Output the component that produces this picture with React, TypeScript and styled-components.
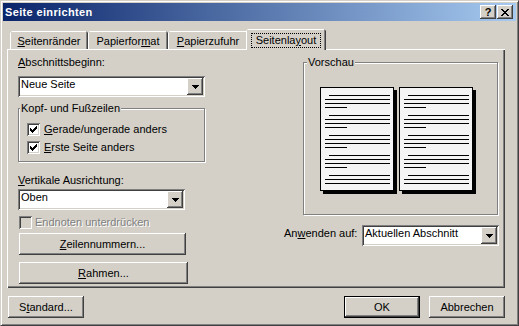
import React from 'react';
import styled, { createGlobalStyle, css } from 'styled-components';

const FACE = '#D4D0C8';

const GlobalStyle = createGlobalStyle`
  html, body { margin: 0; padding: 0; background: ${FACE}; }
  body { font-family: "Liberation Sans", Arial, sans-serif; font-size: 11px; }
  * { box-sizing: border-box; }
`;

const raised = css`
  box-shadow: inset -1px -1px 0 #404040, inset 1px 1px 0 #fff, inset -2px -2px 0 #808080;
`;
const sunken = css`
  box-shadow: inset 1px 1px 0 #808080, inset -1px -1px 0 #fff, inset 2px 2px 0 #404040, inset -2px -2px 0 ${FACE};
`;

const Window = styled.div`
  width: 519px;
  height: 326px;
  background: ${FACE};
  border: 1px solid;
  border-color: ${FACE} #404040 #404040 ${FACE};
  box-shadow: inset 1px 1px 0 #fff, inset -1px -1px 0 #808080;
  padding: 2px;
  display: flex;
  flex-direction: column;
  color: #000;
  font: 11px "Liberation Sans", Arial, sans-serif;
`;

const TitleBar = styled.div`
  flex: none;
  height: 18px;
  margin-bottom: 1px;
  padding: 0 3px 0 2px;
  display: flex;
  align-items: center;
  background: linear-gradient(to right, #0a246a, #a6caf0);
`;

const Title = styled.span`
  flex: 1;
  color: #fff;
  font-weight: bold;
  letter-spacing: 0.35px;
  line-height: 13px;
`;

const CaptionButtons = styled.div`
  display: flex;
  gap: 1px;
`;

const CaptionButton = styled.div`
  width: 16px;
  height: 14px;
  background: ${FACE};
  ${raised};
  display: flex;
  align-items: center;
  justify-content: center;
`;

const HelpGlyph = styled.span`
  font-weight: bold;
  font-size: 11px;
  line-height: 11px;
  margin-top: 1px;
`;

const Client = styled.div`
  flex: 1;
  display: flex;
  flex-direction: column;
  padding: 7px 11px 0 4px;
`;

const TabRow = styled.div`
  height: 20px;
  display: flex;
  align-items: flex-end;
  padding-left: 3px;
  position: relative;
  z-index: 1;
`;

const Tab = styled.div<{ $w: number; $active?: boolean }>`
  width: ${(p) => p.$w}px;
  height: ${(p) => (p.$active ? 21 : 18)}px;
  margin: ${(p) => (p.$active ? '0 -2px -1px' : '0')};
  padding-top: 4px;
  background: ${FACE};
  box-shadow: inset -1px 0 0 #404040, inset -2px 0 0 #808080, inset 1px 1px 0 #fff;
  clip-path: polygon(0 2px, 2px 0, calc(100% - 2px) 0, 100% 2px, 100% 100%, 0 100%);
  display: flex;
  justify-content: center;
  align-items: flex-start;
  line-height: 13px;
  white-space: nowrap;
`;

const FocusRect = styled.span`
  border: 1px dotted #000;
  padding: 0 4px;
  line-height: 13px;
`;

const Panel = styled.div`
  height: 239px;
  background: ${FACE};
  box-shadow: inset 1px 1px 0 #fff, inset -1px -1px 0 #404040, inset -2px -2px 0 #808080;
  display: flex;
  padding: 7px 6px 0 11px;
  gap: 79px;
`;

const Column = styled.div<{ $w: number }>`
  width: ${(p) => p.$w}px;
  display: flex;
  flex-direction: column;
  align-items: flex-start;
`;

const Label = styled.div<{ $mt?: number }>`
  line-height: 13px;
  height: 13px;
  margin-top: ${(p) => p.$mt ?? 0}px;
  white-space: nowrap;
`;

const Acc = styled.span`
  text-decoration: underline;
  text-underline-offset: 1px;
`;

const ComboBox = styled.div<{ $w: number; $mt?: number }>`
  width: ${(p) => p.$w}px;
  height: 21px;
  margin-top: ${(p) => p.$mt ?? 0}px;
  flex: none;
  background: #fff;
  ${sunken};
  padding: 2px;
  display: flex;
`;

const ComboText = styled.span`
  flex: 1;
  padding-left: 1px;
  line-height: 13px;
  white-space: nowrap;
`;

const ComboArrow = styled.span`
  width: 16px;
  height: 17px;
  background: ${FACE};
  ${raised};
  display: flex;
  align-items: center;
  justify-content: center;
`;

const GroupBox = styled.div<{ $w: number; $mt?: number; $ml?: number }>`
  width: ${(p) => p.$w}px;
  margin-top: ${(p) => p.$mt ?? 0}px;
  margin-left: ${(p) => p.$ml ?? 0}px;
  border: 1px solid #808080;
  box-shadow: 1px 1px 0 #fff, inset 1px 1px 0 #fff;
  display: flex;
  flex-direction: column;
  align-items: flex-start;
`;

const Legend = styled.div<{ $ml: number }>`
  margin: -7px 0 0 ${(p) => p.$ml}px;
  padding: 0 1px;
  background: ${FACE};
  line-height: 13px;
  height: 13px;
  white-space: nowrap;
`;

const CheckList = styled.div`
  display: flex;
  flex-direction: column;
  gap: 5px;
  padding: 8px 0 7px 8px;
`;

const CheckRow = styled.div<{ $disabled?: boolean; $mt?: number; $ml?: number; $gap: number }>`
  display: flex;
  align-items: center;
  gap: ${(p) => p.$gap}px;
  height: 13px;
  margin-top: ${(p) => p.$mt ?? 0}px;
  margin-left: ${(p) => p.$ml ?? 0}px;
  line-height: 13px;
  white-space: nowrap;
  color: ${(p) => (p.$disabled ? '#808080' : '#000')};
  text-shadow: ${(p) => (p.$disabled ? '1px 1px 0 #fff' : 'none')};
`;

const CheckBox = styled.span<{ $disabled?: boolean }>`
  width: 13px;
  height: 13px;
  flex: none;
  background: ${(p) => (p.$disabled ? FACE : '#fff')};
  ${sunken};
  display: flex;
  align-items: center;
  justify-content: center;
`;

const PushButton = styled.button<{ $w: number; $h?: number; $mt?: number; $ml?: number; $default?: boolean }>`
  width: ${(p) => p.$w}px;
  height: ${(p) => p.$h ?? 22}px;
  margin: ${(p) => p.$mt ?? 0}px 0 0 ${(p) => p.$ml ?? 0}px;
  padding: 0;
  flex: none;
  font: inherit;
  color: #000;
  line-height: 13px;
  background: ${FACE};
  border: ${(p) => (p.$default ? '1px solid #000' : 'none')};
  ${raised};
  display: flex;
  align-items: center;
  justify-content: center;
  white-space: nowrap;
`;

const Previews = styled.div`
  display: flex;
  gap: 2px;
  margin-top: 18px;
  padding: 0 0 20px 16px;
`;

const ApplyRow = styled.div`
  width: 100%;
  margin-top: 10px;
  display: flex;
  justify-content: space-between;
  align-items: flex-start;
`;

const ButtonRow = styled.div`
  margin-top: 8px;
  height: 22px;
  display: flex;
  padding-left: 1px;
`;

const Spacer = styled.div`
  flex: 1;
`;

const ButtonGap = styled.div`
  width: 9px;
`;

const CheckMark = () => (
  <svg width={7} height={7} viewBox="0 0 7 7" shapeRendering="crispEdges">
    <path
      fill="#000"
      d="M0 2h1v3h-1z M1 3h1v3h-1z M2 4h1v3h-1z M3 3h1v3h-1z M4 2h1v3h-1z M5 1h1v3h-1z M6 0h1v3h-1z"
    />
  </svg>
);

const DownArrow = () => (
  <svg width={7} height={4} viewBox="0 0 7 4" shapeRendering="crispEdges">
    <path fill="#000" d="M0 0h7v1h-7z M1 1h5v1h-5z M2 2h3v1h-3z M3 3h1v1h-1z" />
  </svg>
);

const CloseGlyph = () => (
  <svg width={8} height={7} viewBox="0 0 8 7" shapeRendering="crispEdges">
    <path
      fill="#000"
      d="M0 0h2v1h-2z M6 0h2v1h-2z M1 1h2v1h-2z M5 1h2v1h-2z M2 2h4v1h-4z M3 3h2v1h-2z M2 4h4v1h-4z M1 5h2v1h-2z M5 5h2v1h-2z M0 6h2v1h-2z M6 6h2v1h-2z"
    />
  </svg>
);

const PagePreview = () => {
  const paras = [0, 20, 40, 60, 80];
  return (
    <svg width={77} height={107} viewBox="0 0 77 107" shapeRendering="crispEdges">
      <rect x={3} y={3} width={74} height={104} fill="#000" />
      <rect x={0.5} y={0.5} width={73} height={103} fill="#f4f4f4" stroke="#000" />
      {paras.map((o, i) => (
        <g key={o} fill="#000">
          <rect x={9} y={8 + o} width={61} height={1} />
          <rect x={5} y={12 + o} width={65} height={1} />
          <rect x={5} y={16 + o} width={65} height={1} />
          {i < paras.length - 1 && <rect x={5} y={20 + o} width={22} height={1} />}
        </g>
      ))}
    </svg>
  );
};

const Combo = ({ w, mt, children }: { w: number; mt?: number; children: React.ReactNode }) => (
  <ComboBox $w={w} $mt={mt}>
    <ComboText>{children}</ComboText>
    <ComboArrow>
      <DownArrow />
    </ComboArrow>
  </ComboBox>
);

export default function App() {
  return (
    <>
      <GlobalStyle />
      <Window>
        <TitleBar>
          <Title>Seite einrichten</Title>
          <CaptionButtons>
            <CaptionButton>
              <HelpGlyph>?</HelpGlyph>
            </CaptionButton>
            <CaptionButton>
              <CloseGlyph />
            </CaptionButton>
          </CaptionButtons>
        </TitleBar>
        <Client>
          <TabRow>
            <Tab $w={78}>
              <span>
                <Acc>S</Acc>eitenränder
              </span>
            </Tab>
            <Tab $w={80}>
              <span>
                Papierfor<Acc>m</Acc>at
              </span>
            </Tab>
            <Tab $w={80}>
              <span>
                <Acc>P</Acc>apierzufuhr
              </span>
            </Tab>
            <Tab $w={80} $active>
              <FocusRect>
                Seitenla<Acc>y</Acc>out
              </FocusRect>
            </Tab>
          </TabRow>
          <Panel>
            <Column $w={187}>
              <Label>
                <Acc>A</Acc>bschnittsbeginn:
              </Label>
              <Combo w={187} mt={7}>
                Neue Seite
              </Combo>
              <GroupBox $w={187} $mt={11}>
                <Legend $ml={1}>Kopf- und Fußzeilen</Legend>
                <CheckList>
                  <CheckRow $gap={4}>
                    <CheckBox>
                      <CheckMark />
                    </CheckBox>
                    <span>
                      <Acc>G</Acc>erade/ungerade anders
                    </span>
                  </CheckRow>
                  <CheckRow $gap={4}>
                    <CheckBox>
                      <CheckMark />
                    </CheckBox>
                    <span>
                      <Acc>E</Acc>rste Seite anders
                    </span>
                  </CheckRow>
                </CheckList>
              </GroupBox>
              <Label $mt={12}>
                <Acc>V</Acc>ertikale Ausrichtung:
              </Label>
              <Combo w={167} mt={2}>
                Oben
              </Combo>
              <CheckRow $disabled $gap={3} $mt={6} $ml={1}>
                <CheckBox $disabled />
                <span>Endnoten unterdrücken</span>
              </CheckRow>
              <PushButton $w={167} $mt={4} $ml={1}>
                <span>
                  <Acc>Z</Acc>eilennummern...
                </span>
              </PushButton>
              <PushButton $w={169} $mt={7} $ml={1}>
                <span>
                  <Acc>R</Acc>ahmen...
                </span>
              </PushButton>
            </Column>
            <Column $w={215}>
              <GroupBox $w={195} $mt={6} $ml={19}>
                <Legend $ml={3}>Vorschau</Legend>
                <Previews>
                  <PagePreview />
                  <PagePreview />
                </Previews>
              </GroupBox>
              <ApplyRow>
                <Label $mt={2}>
                  An<Acc>w</Acc>enden auf:
                </Label>
                <Combo w={137}>Aktuellen Abschnitt</Combo>
              </ApplyRow>
            </Column>
          </Panel>
          <ButtonRow>
            <PushButton $w={76}>
              <span>
                S<Acc>t</Acc>andard...
              </span>
            </PushButton>
            <Spacer />
            <PushButton $w={76} $default>
              OK
            </PushButton>
            <ButtonGap />
            <PushButton $w={76}>Abbrechen</PushButton>
          </ButtonRow>
        </Client>
      </Window>
    </>
  );
}
